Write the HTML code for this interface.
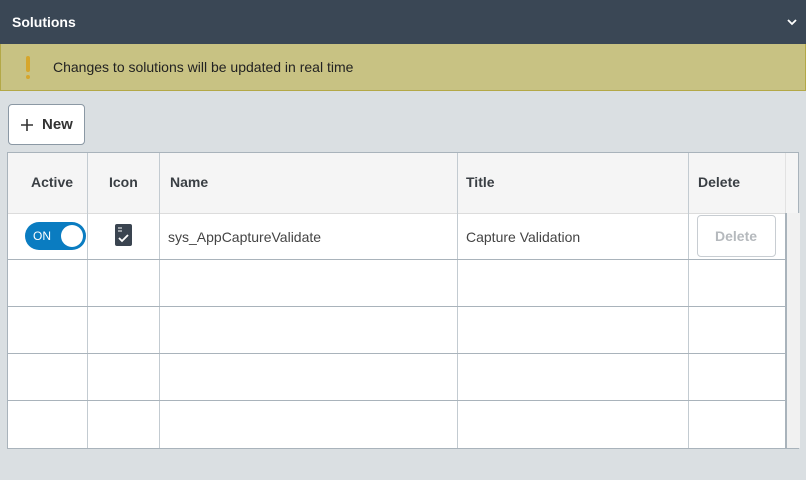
<html><head><style>
body{margin:0;width:806px;height:480px;background:#dadfe2;font-family:"Liberation Sans",sans-serif;position:relative;overflow:hidden}
.a{position:absolute}
.hd{left:0;top:0;width:806px;height:44px;background:#3a4755;color:#fff;font-weight:bold;font-size:14px}
.bn{left:0;top:44px;width:804px;height:46px;background:#c8c283;border:1px solid #b3a847;border-top:none}
.vl{position:absolute;width:1px;background:#c3cbd1}
.hl{position:absolute;height:1px;background:#a9b3bb}
.th{position:absolute;top:174px;font-size:14px;font-weight:bold;color:#3a3f44}
</style></head><body>
<div class="a hd"><span class="a" style="left:12px;top:14px">Solutions</span>
<svg class="a" style="left:786px;top:18px" width="12" height="8"><path d="M2 2l4 4 4-4" stroke="#fff" stroke-width="1.8" fill="none"/></svg></div>
<div class="a bn"><div class="a" style="left:25px;top:12px;width:4px;height:16px;background:#d6a62c;border-radius:2px"></div><div class="a" style="left:25px;top:31px;width:4px;height:4px;background:#d6a62c;border-radius:2px"></div>
<span class="a" style="left:52px;top:15px;font-size:14px;color:#222">Changes to solutions will be updated in real time</span></div>
<div class="a" style="left:8px;top:104px;width:75px;height:39px;background:#fff;border:1px solid #8b98a4;border-radius:4px">
<svg class="a" style="left:12px;top:14px" width="12" height="12"><path d="M6 0v12M0 6h12" stroke="#333" stroke-width="1.6"/></svg>
<span class="a" style="left:33px;top:11px;font-size:15px;color:#333;font-weight:bold">New</span></div>
<div class="a" style="left:7px;top:152px;width:790px;height:295px;background:#fff;border:1px solid #a9b3bb">
<div class="a" style="left:0;top:0;width:790px;height:60px;background:#f5f5f5;border-bottom:1px solid #dcdcdc"></div>
<div class="a" style="left:777px;top:60px;width:13px;height:235px;background:#f1f1f1;border-left:2px solid #a9b3bb"></div>
</div>
<div class="vl" style="left:87px;top:153px;height:295px"></div>
<div class="vl" style="left:159px;top:153px;height:295px"></div>
<div class="vl" style="left:457px;top:153px;height:295px"></div>
<div class="vl" style="left:688px;top:153px;height:295px"></div>
<div class="vl" style="left:785px;top:153px;height:60px;background:#e2e2e2"></div>
<div class="hl" style="left:8px;top:259px;width:777px"></div>
<div class="hl" style="left:8px;top:306px;width:777px"></div>
<div class="hl" style="left:8px;top:353px;width:777px"></div>
<div class="hl" style="left:8px;top:400px;width:777px"></div>
<span class="th" style="left:31px">Active</span><span class="th" style="left:109px">Icon</span><span class="th" style="left:170px">Name</span><span class="th" style="left:466px">Title</span><span class="th" style="left:698px">Delete</span>
<div class="a" style="left:25px;top:222px;width:61px;height:28px;background:#0a7cc1;border-radius:14px"><span class="a" style="left:8px;top:7px;color:#fff;font-size:12px">ON</span><div class="a" style="left:36px;top:3px;width:22px;height:22px;border-radius:11px;background:#fff"></div></div>
<svg class="a" style="left:115px;top:224px" width="17" height="22"><rect x="0" y="0" width="17" height="22" rx="2" fill="#3a4450"/><path d="M3 4h4M3 7h4" stroke="#fff" stroke-width="1"/><path d="M4 14l3 3 6-6" stroke="#fff" stroke-width="1.8" fill="none"/></svg>
<span class="a" style="left:168px;top:229px;font-size:14px;color:#444">sys_AppCaptureValidate</span>
<span class="a" style="left:466px;top:229px;font-size:14px;color:#444">Capture Validation</span>
<div class="a" style="left:697px;top:215px;width:77px;height:40px;border:1px solid #c8cdd2;border-radius:4px;background:#fff"><span class="a" style="left:17px;top:12px;font-size:14px;font-weight:bold;color:#b5b9bd">Delete</span></div>
</body></html>
